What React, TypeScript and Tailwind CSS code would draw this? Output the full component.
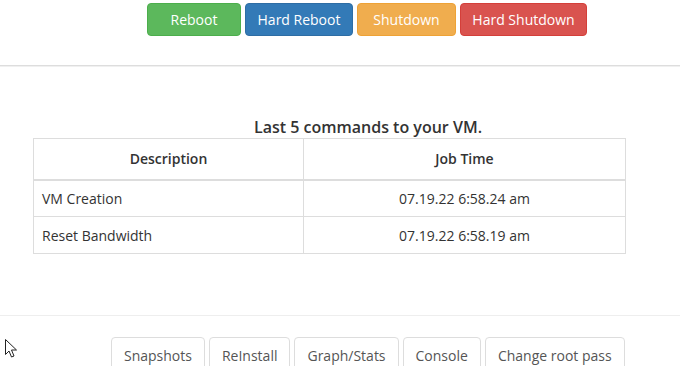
import React from "react";

const font = { fontFamily: '"Open Sans", "Noto Sans", sans-serif' };

export default function App() {
  return (
    <div className="relative w-[680px] h-[366px] overflow-hidden bg-white text-[#333]" style={font}>
      {/* Action buttons */}
      <div className="flex pt-[3px] pl-[147px] gap-[4px]">
        <button className="w-[94px] h-[33px] rounded-[4px] border border-[#4cae4c] bg-[#5cb85c] text-white text-[14px]">Reboot</button>
        <button className="w-[108px] h-[33px] rounded-[4px] border border-[#2e6da4] bg-[#337ab7] text-white text-[14px]">Hard Reboot</button>
        <button className="w-[99px] h-[33px] rounded-[4px] border border-[#eea236] bg-[#f0ad4e] text-white text-[14px]">Shutdown</button>
        <button className="w-[127px] h-[33px] rounded-[4px] border border-[#d43f3a] bg-[#d9534f] text-white text-[14px]">Hard Shutdown</button>
      </div>

      <div className="mt-[29px] border-t border-[#ddd] border-b-[1px] border-b-[#f0f0f0] h-[2px]" />

      {/* Title */}
      <div className="mt-[49px] pl-[56px] text-center text-[16px] font-semibold leading-[22px] text-[#333]">
        Last 5 commands to your VM.
      </div>

      {/* Table */}
      <table className="ml-[33px] w-[593px] border-collapse text-[14px] text-[#333]">
        <thead>
          <tr className="h-[41px] border-b-2 border-[#ddd]">
            <th className="w-[270px] border border-[#ddd] font-semibold text-center">Description</th>
            <th className="border border-[#ddd] font-semibold text-center">Job Time</th>
          </tr>
        </thead>
        <tbody>
          <tr className="h-[37px]">
            <td className="border border-[#ddd] px-[8px]">VM Creation</td>
            <td className="border border-[#ddd] text-center">07.19.22 6:58.24 am</td>
          </tr>
          <tr className="h-[37px]">
            <td className="border border-[#ddd] px-[8px]">Reset Bandwidth</td>
            <td className="border border-[#ddd] text-center">07.19.22 6:58.19 am</td>
          </tr>
        </tbody>
      </table>

      <div className="mt-[61px] border-t border-[#eee]" />

      {/* Tabs */}
      <div className="flex pl-[111px] mt-[21px] gap-[4px] text-[14px] text-[#555]">
        {["Snapshots", "ReInstall", "Graph/Stats", "Console", "Change root pass"].map((t) => (
          <div key={t} className="px-[12px] h-[40px] leading-[36px] border border-[#ddd] rounded-t-[4px]">
            {t}
          </div>
        ))}
      </div>

      {/* Mouse cursor */}
      <svg className="absolute left-[5px] top-[339px]" width="13" height="20" viewBox="0 0 13 20">
        <path d="M0.5 0.5 L0.5 15.5 L4 12 L6.5 18 L9 17 L6.5 11 L11.5 11 Z" fill="white" stroke="#222" strokeWidth="1" />
      </svg>
    </div>
  );
}
